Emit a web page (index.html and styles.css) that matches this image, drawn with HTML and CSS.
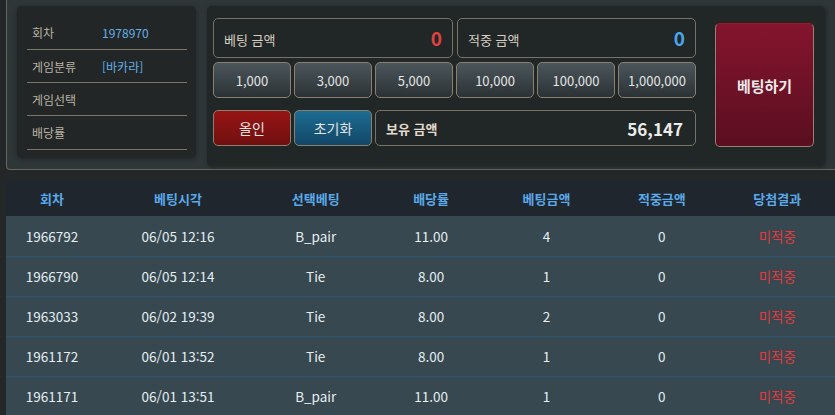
FILE: index.html
```html
<!DOCTYPE html>
<html lang="ko">
<head>
<meta charset="utf-8">
<link rel="stylesheet" href="styles.css">
</head>
<body>
<div class="top">
  <div class="info">
    <div class="irow"><span class="ilabel">회차</span><span class="ival">1978970</span></div>
    <div class="irow"><span class="ilabel">게임분류</span><span class="ival">[바카라]</span></div>
    <div class="irow"><span class="ilabel">게임선택</span><span class="ival"></span></div>
    <div class="irow"><span class="ilabel">배당률</span><span class="ival"></span></div>
  </div>
  <div class="betpanel">
    <div class="betgrid">
      <div class="box span3"><span class="blabel">베팅 금액</span><span class="bval red">0</span></div>
      <div class="box span3"><span class="blabel">적중 금액</span><span class="bval blue">0</span></div>
      <button class="chip">1,000</button>
      <button class="chip">3,000</button>
      <button class="chip">5,000</button>
      <button class="chip">10,000</button>
      <button class="chip">100,000</button>
      <button class="chip">1,000,000</button>
      <button class="act allin">올인</button>
      <button class="act reset">초기화</button>
      <div class="box span4 hold"><span class="hlabel">보유 금액</span><span class="hval">56,147</span></div>
    </div>
    <button class="betbtn">베팅하기</button>
  </div>
</div>
<table class="hist">
  <thead>
    <tr><th class="c1">회차</th><th class="c2">베팅시각</th><th>선택베팅</th><th>배당률</th><th>베팅금액</th><th>적중금액</th><th>당첨결과</th></tr>
  </thead>
  <tbody>
    <tr><td>1966792</td><td>06/05 12:16</td><td>B_pair</td><td>11.00</td><td>4</td><td>0</td><td class="lose">미적중</td></tr>
    <tr><td>1966790</td><td>06/05 12:14</td><td>Tie</td><td>8.00</td><td>1</td><td>0</td><td class="lose">미적중</td></tr>
    <tr><td>1963033</td><td>06/02 19:39</td><td>Tie</td><td>8.00</td><td>2</td><td>0</td><td class="lose">미적중</td></tr>
    <tr><td>1961172</td><td>06/01 13:52</td><td>Tie</td><td>8.00</td><td>1</td><td>0</td><td class="lose">미적중</td></tr>
    <tr><td>1961171</td><td>06/01 13:51</td><td>B_pair</td><td>11.00</td><td>1</td><td>0</td><td class="lose">미적중</td></tr>
  </tbody>
</table>
</body>
</html>
```
FILE: styles.css
```css
* { box-sizing: border-box; }
html, body { margin: 0; padding: 0; }
body {
  background: #242727;
  font-family: "Noto Sans CJK KR", "Noto Sans", sans-serif;
  width: 835px;
  height: 415px;
  overflow: hidden;
}
.top {
  margin-left: 6px;
  width: 839px;
  height: 170px;
  background: #2f3638;
  border: 1px solid #6c665a;
  border-top: none;
  border-radius: 0 0 4px 4px;
  display: flex;
  align-items: flex-start;
  padding: 6px 0 0 10px;
  gap: 11px;
}
.info {
  width: 179px;
  height: 152px;
  background: #222626;
  border-radius: 5px;
  box-shadow: 0 1px 4px rgba(0,0,0,0.35);
  padding: 10px 9px 0 10px;
}
.irow {
  height: 34px;
  border-bottom: 1px solid #7c7465;
  display: flex;
  align-items: center;
  font-size: 12px;
}
.irow:nth-child(2), .irow:nth-child(3) { height: 33px; }
.ilabel { width: 75px; padding-left: 5px; color: #b9b2a4; }
.ival { color: #62b0e6; }
.betpanel {
  width: 618px;
  height: 160px;
  background: #212626;
  border-radius: 5px;
  box-shadow: 1px 1px 4px rgba(0,0,0,0.35);
  display: flex;
  align-items: flex-start;
  padding: 12px 11px 0 6px;
}
.betgrid {
  display: grid;
  grid-template-columns: repeat(6, 78px);
  grid-template-rows: 40px 36px 44px;
  column-gap: 3px;
  row-gap: 4px;
}
.betgrid .act, .betgrid .hold { margin-top: 8px; height: 36px; }
.box {
  border: 1px solid #7a7264;
  border-radius: 5px;
  background: #212626;
  display: flex;
  align-items: center;
  justify-content: space-between;
  padding: 0 10px 0 10px;
}
.span3 { grid-column: span 3; }
.span4 { grid-column: span 4; }
.betgrid .span3:nth-child(2) { margin-left: 1px; }
.blabel { font-size: 13px; color: #d6cfc2; padding-top: 2px; }
.bval { font-size: 19px; font-weight: bold; padding-bottom: 1px; }
.red { color: #e04242; }
.blue { color: #4aa6ea; }
.chip, .act {
  font-family: inherit;
  font-size: 13px;
  color: #e4e4e4;
  border: 1px solid #8a8070;
  border-radius: 5px;
  padding: 0;
  height: 36px;
}
.chip { background: linear-gradient(#4b565b, #2b3235); }
.allin { background: linear-gradient(#981414, #701010); font-size: 14px; }
.reset { background: linear-gradient(#1d6c93, #124767); font-size: 14px; }
.hold { padding: 0 12px 0 10px; }
.hlabel { font-size: 13px; font-weight: bold; color: #e2dbce; }
.hval { font-size: 17px; font-weight: bold; color: #ececec; }
.betbtn {
  margin: 5px 0 0 19px;
  width: 99px;
  height: 124px;
  border: 1px solid #9a8074;
  border-top-color: #a11824;
  border-radius: 5px;
  background: linear-gradient(#84152e, #5a0e20);
  color: #f2eaea;
  font-family: inherit;
  font-size: 15px;
  font-weight: bold;
  padding: 0;
}
.hist {
  margin: 10px 0 0 6px;
  width: 829px;
  border-collapse: collapse;
  table-layout: fixed;
}
.hist th {
  height: 36px;
  background: #1f262e;
  color: #5aa9e8;
  font-size: 13px;
  font-weight: bold;
  text-align: center;
  padding: 0;
}
.hist th.c1 { width: 92px; }
.hist th.c2 { width: 160px; }
.hist td {
  height: 40px;
  background: #374850;
  border-bottom: 1px solid #2b5777;
  color: #e6eef2;
  font-size: 13.5px;
  text-align: center;
  padding: 0;
}
.hist td.lose { color: #e23a3c; }
```
